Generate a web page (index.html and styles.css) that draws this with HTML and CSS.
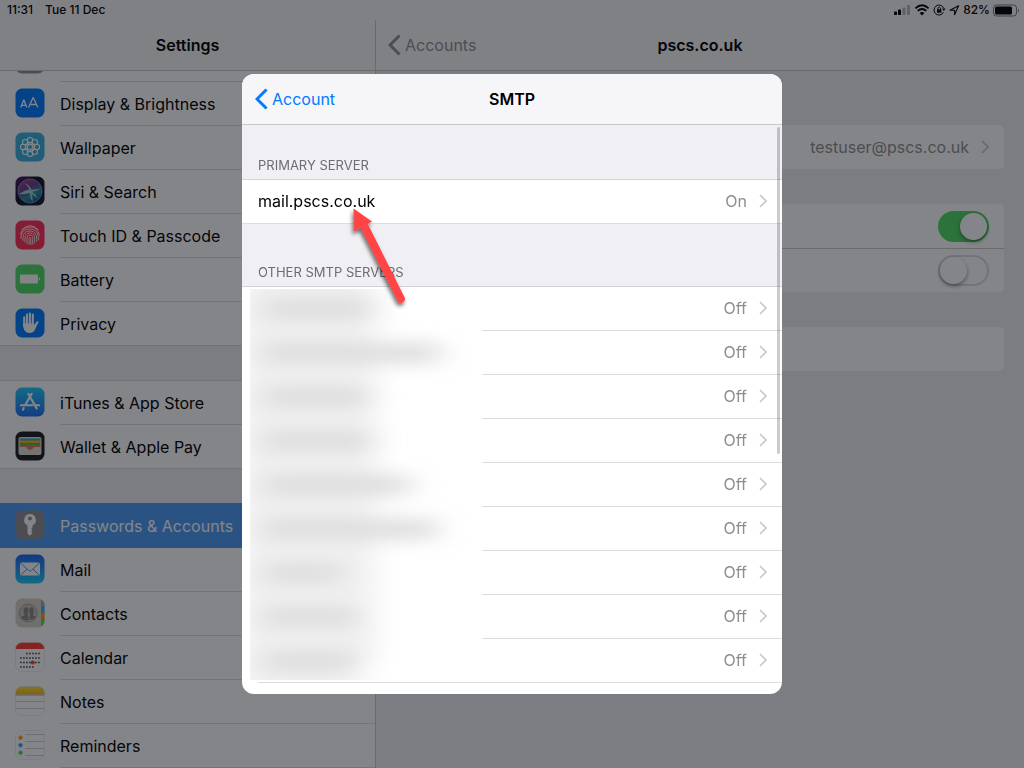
FILE: index.html
```
<!DOCTYPE html>
<html lang="en">
<head>
<meta charset="utf-8">
<title>Settings</title>
<link rel="stylesheet" href="styles.css">
</head>
<body>
<svg class="defs" aria-hidden="true">
  <defs>
    <linearGradient id="store" x1="0" y1="0" x2="0" y2="1"><stop offset="0" stop-color="#1fc8fb"/><stop offset="1" stop-color="#1c6ff2"/></linearGradient>
    <linearGradient id="mail" x1="0" y1="0" x2="0" y2="1"><stop offset="0" stop-color="#1d62f0"/><stop offset="1" stop-color="#19c9fb"/></linearGradient>
    <linearGradient id="notes" x1="0" y1="0" x2="0" y2="1"><stop offset="0" stop-color="#fadb4e"/><stop offset="1" stop-color="#f5c000"/></linearGradient>
    <linearGradient id="siri" x1="0" y1="0" x2="1" y2="1"><stop offset="0" stop-color="#4a1d6e"/><stop offset=".4" stop-color="#141028"/><stop offset="1" stop-color="#101a3c"/></linearGradient>
    <linearGradient id="orb" x1=".2" y1="0" x2=".7" y2="1"><stop offset="0" stop-color="#d8388f"/><stop offset=".4" stop-color="#7b53ae"/><stop offset=".7" stop-color="#2bb1b5"/><stop offset="1" stop-color="#2a55b8"/></linearGradient>
    <clipPath id="tile"><rect x=".5" y=".5" width="29" height="29" rx="6.5"/></clipPath>
    <filter id="soft" x="-30%" y="-30%" width="160%" height="160%"><feGaussianBlur stdDeviation="15 9"/></filter>
    <filter id="drop" x="-30%" y="-30%" width="160%" height="160%"><feDropShadow dx="-1" dy="3" stdDeviation="2" flood-color="#000" flood-opacity=".6"/></filter>
    <symbol id="chevron" viewBox="0 0 8 14"><path d="M1 1l6 6-6 6" fill="none" stroke="currentColor" stroke-width="1.7"/></symbol>
    <symbol id="back" viewBox="0 0 13 22"><path d="M11.500 1.500L2 11l9.500 9.500" fill="none" stroke="currentColor" stroke-width="3"/></symbol>
  </defs>
</svg>

<div class="app">
  <div class="status">
    <div class="status-side"><span>11:31</span><span>Tue 11 Dec</span></div>
    <div class="status-icons">
      <svg width="18" height="12" viewBox="0 0 18 12"><rect x="1" y="7.500" width="3" height="3.500" rx=".7"/><rect x="5" y="5.500" width="3" height="5.500" rx=".7"/><rect x="9.500" y="3.500" width="3" height="7.500" rx=".7" opacity=".25"/><rect x="14" y="1" width="3" height="10" rx=".7" opacity=".25"/></svg>
      <svg class="wifi" width="16" height="12" viewBox="0 0 16 12"><path d="M8 11.500L5.600 8.900Q8 7 10.400 8.900z"/><path d="M1.400 4.400Q8-1.700 14.600 4.400M3.700 6.900Q8 3 12.300 6.900" fill="none" stroke="#000" stroke-width="1.900"/></svg>
      <svg width="13" height="12" viewBox="0 0 13 12"><path d="M10.600 4A5 5 0 1 0 10.500 8.300" fill="none" stroke="#000"/><path d="M9 4.500h3.500L10.800 7z"/><rect x="4" y="5.300" width="4.400" height="3.400"/><path d="M4.900 5.300V4q1.300-2 2.600 0v1.300" fill="none" stroke="#000" stroke-width=".9"/></svg>
      <svg width="11" height="12" viewBox="0 0 11 12"><path d="M1 6.300L9.600 1.700 5.600 10.800V6.300z" fill="none" stroke="#000" stroke-width="1.100" stroke-linejoin="round"/></svg>
      <span>82%</span>
      <svg width="27" height="13" viewBox="0 0 27 13"><rect x=".5" y="1" width="23" height="11" rx="3" fill="none" stroke="#777"/><rect x="2" y="2.500" width="17" height="8" rx="1.500"/><path d="M25 4.500q1.800 2 0 4z" fill="#777"/></svg>
    </div>
  </div>

  <nav class="sidebar">
    <header class="bar"><h1>Settings</h1></header>
    <div class="list">
      <div class="row"><svg class="icon" viewBox="0 0 30 30"><rect x=".5" y=".5" width="29" height="29" rx="6.500" fill="#8e8e93"/></svg><span class="name"></span></div>
      <a class="row" href="#"><svg class="icon" viewBox="0 0 30 30"><rect x=".5" y=".5" width="29" height="29" rx="6.500" fill="#007aff"/><g fill="none" stroke="#fff"><path d="M5.800 19.500l2.800-7.300h.4l2.800 7.300M7 17.300h4" stroke-width="1.300"/><path d="M13.600 19.500l4.400-9.700h.4l4.400 9.700M15.200 16.500h6.200" stroke-width="1.300"/></g></svg><span class="name">Display &amp; Brightness</span></a>
      <a class="row" href="#"><svg class="icon" viewBox="0 0 30 30"><rect x=".5" y=".5" width="29" height="29" rx="6.500" fill="#37aedb"/><g fill="none" stroke="#fff" stroke-width="1.100"><circle cx="15" cy="15" r="2.600"/><circle cx="15" cy="8.200" r="2.700"/><circle cx="19.800" cy="10.200" r="2.700"/><circle cx="21.800" cy="15" r="2.700"/><circle cx="19.800" cy="19.800" r="2.700"/><circle cx="15" cy="21.800" r="2.700"/><circle cx="10.200" cy="19.800" r="2.700"/><circle cx="8.200" cy="15" r="2.700"/><circle cx="10.200" cy="10.200" r="2.700"/><circle cx="15" cy="15" r="4.600"/></g></svg><span class="name">Wallpaper</span></a>
      <a class="row" href="#"><svg class="icon" viewBox="0 0 30 30"><rect x=".5" y=".5" width="29" height="29" rx="6.500" fill="url(#siri)"/><circle cx="15" cy="15" r="12" fill="url(#orb)" opacity=".75"/><circle cx="15" cy="15" r="12" fill="none" stroke="#8fa3c8" stroke-width=".7"/><path d="M4 18q6-4 10.500-4.500Q13 10 9.500 7q5 2 6.800 6.500Q21 14 26 12.500q-5 3-8.700 3.300Q21 19 23 22.500q-4-2.500-6.500-5Q18 22 17.500 26q-2.500-4-2.800-9Q10 18.500 4 18z" fill="#b4ecf0" opacity=".8"/></svg><span class="name">Siri &amp; Search</span></a>
      <a class="row" href="#"><svg class="icon" viewBox="0 0 30 30"><rect x=".5" y=".5" width="29" height="29" rx="6.500" fill="#ff2d55"/><g fill="none" stroke="#fff" stroke-width=".9" stroke-linecap="round" opacity=".9"><path d="M7 9.500Q15 1.500 23 9.500M5.600 14Q7 7 15 7t9.400 8M6 18.500V17q0-8 9-8t8.700 11"/><path d="M8 20.500v-3q0-6.500 7-6.500t6.700 8.500l-.4 2M10 22v-4q0-5 5-5t4.700 7l-.7 3.500M12 23.500V18q0-3 3-3t2.700 4.500l-.7 5M14 24.500V18q1-1.500 1.800 0l-.4 6"/></g></svg><span class="name">Touch ID &amp; Passcode</span></a>
      <a class="row" href="#"><svg class="icon" viewBox="0 0 30 30"><rect x=".5" y=".5" width="29" height="29" rx="6.500" fill="#4cd964"/><rect x="5" y="10.500" width="18" height="9" rx="1.200" fill="#fff"/><path d="M24 13.300q2.400 1.700 0 3.400z" fill="#fff"/></svg><span class="name">Battery</span></a>
      <a class="row" href="#"><svg class="icon" viewBox="0 0 30 30"><rect x=".5" y=".5" width="29" height="29" rx="6.500" fill="#007aff"/><g stroke="#fff" stroke-width="2.100" stroke-linecap="round" fill="none"><path d="M9.200 9.300v9M12 6.600V17M14.900 5.500V17M17.800 6.600V17"/></g><path d="M8.150 15.500h10.700v1.800l3-3.700q1.300-.8 1.900.2-1.500 2.900-3.300 6.900-1.700 4.300-5.600 4.300-5.300 0-6.300-5z" fill="#fff"/></svg><span class="name">Privacy</span></a>
      <div class="gap"></div>
      <a class="row" href="#"><svg class="icon" viewBox="0 0 30 30"><rect x=".5" y=".5" width="29" height="29" rx="6.500" fill="url(#store)"/><g stroke="#fff" stroke-width="2.100" stroke-linecap="round" fill="none"><path d="M13.300 6.800L21.700 21.500M16.700 6.800L10.200 18M8.700 21l-.8 1.700M5.800 18.300h11.600M20.600 18.300h3.600"/></g></svg><span class="name">iTunes &amp; App Store</span></a>
      <a class="row last" href="#"><svg class="icon" viewBox="0 0 30 30"><rect x=".5" y=".5" width="29" height="29" rx="6.500" fill="#1c1c20"/><rect x="3.500" y="6" width="23" height="18" rx="2" fill="#dedcd2"/><path d="M4.700 7.500h20.600v3H4.700z" fill="#3c9fd5"/><path d="M4.700 9.500h20.600v3H4.700z" fill="#ffb700"/><path d="M4.700 11.800h20.600v3H4.700z" fill="#46bb4c"/><path d="M4.700 14h20.600v2H19q-1.400 3-4 3t-4-3H4.700z" fill="#f36d62"/></svg><span class="name">Wallet &amp; Apple Pay</span></a>
      <div class="gap"></div>
      <a class="row selected" href="#" aria-current="page"><svg class="icon" viewBox="0 0 30 30"><rect x=".5" y=".5" width="29" height="29" rx="6.500" fill="#8e8e93"/><path fill-rule="evenodd" d="M15 4a6 6 0 0 0-2.500 11.400v8l2.300 2.300 2.700-2.500-1.400-1.300 1.500-1.500-1.500-1.500 1.400-1.300v-2.200A6 6 0 0 0 15 4zm0 2.600a1.900 1.900 0 1 1 0 3.800 1.900 1.900 0 0 1 0-3.800z" fill="#fff"/></svg><span class="name">Passwords &amp; Accounts</span></a>
      <a class="row" href="#"><svg class="icon" viewBox="0 0 30 30"><rect x=".5" y=".5" width="29" height="29" rx="6.500" fill="url(#mail)"/><rect x="5" y="8.500" width="20" height="13" rx="1.500" fill="#fff"/><path d="M5.500 9l8.300 7.600q1.200 1 2.400 0L24.500 9M5.500 21.200l6.500-6M24.500 21.200l-6.500-6" fill="none" stroke="#2b93f5" stroke-width=".9"/></svg><span class="name">Mail</span></a>
      <a class="row" href="#"><svg class="icon" viewBox="0 0 30 30"><g clip-path="url(#tile)"><path d="M0 0h30v30H0z" fill="#d6d3cb"/><path d="M26 0h4v8h-4z" fill="#a9a9a9"/><path d="M26 8h4v7h-4z" fill="#39b3f0"/><path d="M26 15h4v7h-4z" fill="#ff9500"/><path d="M26 22h4v8h-4z" fill="#4cd964"/></g><circle cx="13.200" cy="15" r="9" fill="#c4c1ba" stroke="#9a9892" stroke-width=".8"/><g fill="#8a8882"><path d="M5.700 20q.4-1.700 3.500-2.500.9-.7-.3-3-1-5.200 2.200-5.200 3 0 2.200 5-1.200 2.400-.3 3.200l1 4.500q-4 1.500-8.300-2z"/><path d="M14.800 22l-.3-4.200q1-.8-.2-3.300-.8-5.200 2.200-5.200t2 5.200q-1.100 2.300-.3 3 2 .6 2.800 1.600-1.700 2.500-6.200 2.900z"/></g></svg><span class="name">Contacts</span></a>
      <a class="row" href="#"><svg class="icon" viewBox="0 0 30 30"><g clip-path="url(#tile)"><path d="M0 0h30v30H0z" fill="#fff"/><path d="M0 0h30v7H0z" fill="#ff3b30"/></g><rect x=".5" y=".5" width="29" height="29" rx="6.500" fill="none" stroke="#ddd" stroke-width=".5"/><path d="M11 11.500h14M5 16h20M5 20.500h20M5 25h14" stroke="#555" stroke-width="1.400" stroke-dasharray="1.800 1.200"/><circle cx="17.700" cy="20.500" r="2" fill="#ff3b30"/></svg><span class="name">Calendar</span></a>
      <a class="row" href="#"><svg class="icon" viewBox="0 0 30 30"><g clip-path="url(#tile)"><path d="M0 0h30v30H0z" fill="#fff"/><path d="M0 0h30v8.500H0z" fill="url(#notes)"/><path d="M0 15.500h30M0 22.500h30" stroke="#d0d0d0"/><path d="M0 9h30" stroke="#aaa"/></g><rect x=".5" y=".5" width="29" height="29" rx="6.500" fill="none" stroke="#ddd" stroke-width=".5"/></svg><span class="name">Notes</span></a>
      <a class="row" href="#"><svg class="icon" viewBox="0 0 30 30"><rect x=".5" y=".5" width="29" height="29" rx="6.500" fill="#fff" stroke="#e2e2e2" stroke-width=".6"/><path d="M10.500 4.500h19M10.500 11.500h19M10.500 18.500h19M10.500 25.500h19" stroke="#d0d0d0"/><circle cx="5.500" cy="7.700" r="2" fill="#ff9500" stroke="#ffc98a"/><circle cx="5.500" cy="15.200" r="2" fill="#1b9cf7" stroke="#94cdf7"/><circle cx="5.500" cy="22.700" r="2" fill="#55d048" stroke="#a9e3a2"/></svg><span class="name">Reminders</span></a>
    </div>
  </nav>

  <main class="detail">
    <header class="bar">
      <button class="back dim"><svg width="13" height="22"><use href="#back"/></svg>Accounts</button>
      <h2>pscs.co.uk</h2>
    </header>
    <div class="cards">
      <a class="card line" href="#"><span>testuser@pscs.co.uk</span><svg class="chev" width="8" height="14"><use href="#chevron"/></svg></a>
      <div class="card">
        <div class="line"><input class="switch" type="checkbox" checked aria-label="Mail"></div>
        <div class="line"><input class="switch" type="checkbox" aria-label="Notes"></div>
      </div>
      <div class="card line"></div>
    </div>
  </main>
</div>

<div class="scrim">
  <section class="sheet" role="dialog" aria-labelledby="sheet-title">
    <header class="sheet-bar">
      <button class="back"><svg width="13" height="22"><use href="#back"/></svg>Account</button>
      <h2 id="sheet-title">SMTP</h2>
    </header>
    <div class="sheet-body">
      <h3>PRIMARY SERVER</h3>
      <a class="server primary" href="#"><span class="host">mail.pscs.co.uk</span><span>On</span><svg class="chev" width="8" height="14"><use href="#chevron"/></svg></a>
      <h3 class="tall">OTHER SMTP SERVERS</h3>
      <div class="servers">
        <a class="server" href="#"><span>Off</span><svg class="chev" width="8" height="14"><use href="#chevron"/></svg></a>
        <a class="server" href="#"><span>Off</span><svg class="chev" width="8" height="14"><use href="#chevron"/></svg></a>
        <a class="server" href="#"><span>Off</span><svg class="chev" width="8" height="14"><use href="#chevron"/></svg></a>
        <a class="server" href="#"><span>Off</span><svg class="chev" width="8" height="14"><use href="#chevron"/></svg></a>
        <a class="server" href="#"><span>Off</span><svg class="chev" width="8" height="14"><use href="#chevron"/></svg></a>
        <a class="server" href="#"><span>Off</span><svg class="chev" width="8" height="14"><use href="#chevron"/></svg></a>
        <a class="server" href="#"><span>Off</span><svg class="chev" width="8" height="14"><use href="#chevron"/></svg></a>
        <a class="server" href="#"><span>Off</span><svg class="chev" width="8" height="14"><use href="#chevron"/></svg></a>
        <a class="server" href="#"><span>Off</span><svg class="chev" width="8" height="14"><use href="#chevron"/></svg></a>
        <svg class="masked" viewBox="0 0 232 391" preserveAspectRatio="none" aria-hidden="true">
          <rect width="232" height="391" fill="#fff"/>
          <g filter="url(#soft)">
            <path d="M-10-30h135v400h-15v60H-10z" fill="#f0f0f0"/>
            <path d="M12 10h113v20H12zM12 54h178v20H12zM12 98h108v20H12zM12 142h112v20H12zM12 186h148v20H12zM12 230h175v20H12zM12 274h80v20H12zM12 318h96v20H12zM12 362h96v20H12z" fill="#dcdcdc"/>
          </g>
        </svg>
      </div>
      <div class="thumb"></div>
    </div>
    <svg class="pointer" width="70" height="110" viewBox="0 0 70 110" aria-hidden="true"><path filter="url(#drop)" d="M10.500 4.500l18.500 13-4.200 2.400 36.600 73.100a3.900 3.900 0 0 1-7 3.700L17.500 23.800 10.800 27.500z" fill="#ff4444"/></svg>
  </section>
</div>
</body>
</html>
```

FILE: styles.css
```
* { box-sizing: border-box; }
body {
  margin: 0;
  height: 100vh;
  overflow: hidden;
  font: 16px/22px Inter, "Liberation Sans", sans-serif;
  color: #000;
  background: #efeff4;
}
h1, h2, h3 { margin: 0; font-size: 16px; font-weight: 600; }
a { color: inherit; text-decoration: none; }
button { border: 0; background: none; padding: 0; font: inherit; cursor: pointer; }
.defs { position: absolute; width: 0; height: 0; }

.app { height: 100vh; display: grid; grid-template-columns: 376px 1fr; grid-template-rows: 20px 1fr; }
.status {
  grid-column: 1 / -1;
  display: flex;
  align-items: center;
  justify-content: space-between;
  padding: 0 4px 0 7px;
  background: #f7f7f7;
  font-size: 12px;
  font-weight: 500;
}
.status-side { display: flex; gap: 12px; }
.status-icons { display: flex; align-items: center; gap: 3px; }

.sidebar, .detail { display: flex; flex-direction: column; min-height: 0; min-width: 0; overflow: hidden; }
.sidebar { border-right: 1px solid #c8c8cc; background: #fff; }
.bar {
  position: relative;
  z-index: 1;
  flex: none;
  height: 51px;
  display: grid;
  place-items: center;
  background: #f7f7f7;
  border-bottom: 1px solid #c8c8cc;
}
.back { display: flex; align-items: center; gap: 4px; color: #007aff; }
.bar .back { position: absolute; left: 12px; }
.dim { color: #8e8e93; }

.list { margin-top: -33px; }
.row { display: flex; align-items: center; height: 44px; padding-left: 15px; }
.icon { flex: none; width: 30px; height: 30px; margin: 0 15px 2px 0; }
.name { flex: 1; height: 44px; line-height: 44px; border-bottom: 1px solid #dcdce0; }
.gap {
  position: relative;
  height: 36px;
  margin-top: -1px;
  background: #efeff4;
  border-top: 1px solid #d8d8dc;
  border-bottom: 1px solid #d8d8dc;
}
.last .name { border-bottom: 0; }
.selected { position: relative; background: #4a9bf5; color: #fff; box-shadow: 0 -1px #4a9bf5; }
.selected .name { border-bottom-color: #4a9bf5; }

.cards { display: flex; flex-direction: column; gap: 35px; padding: 54px 20px 0; }
.card { background: #fff; border-radius: 5px; color: #8e8e93; }
.line { display: flex; align-items: center; justify-content: flex-end; gap: 12px; height: 44px; padding-right: 15px; }
.line + .line { border-top: 1px solid #c8c7cc; }
.chev { color: #c7c7cc; }
.switch {
  appearance: none;
  margin: 0;
  width: 51px;
  height: 31px;
  border-radius: 16px;
  border: 2px solid #dcdce0;
  display: flex;
}
.switch::before {
  content: "";
  width: 27px;
  height: 27px;
  border-radius: 50%;
  background: #fff;
  box-shadow: 0 2px 4px rgba(0, 0, 0, .4);
}
.switch:checked { background: #4cd964; border-color: #4cd964; justify-content: flex-end; }

.scrim {
  position: fixed;
  z-index: 2;
  inset: 0;
  display: grid;
  place-items: center;
  background: rgba(10, 12, 18, .5);
}
.sheet {
  position: relative;
  display: flex;
  flex-direction: column;
  width: min(540px, 100vw);
  height: min(620px, 100vh);
  border-radius: 12px;
  overflow: hidden;
  background: #fff;
}
.sheet-bar {
  position: relative;
  flex: none;
  height: 51px;
  display: grid;
  place-items: center;
  background: #f6f6f8;
  border-bottom: 1px solid #c8c8cc;
}
.sheet-bar .back { position: absolute; left: 13px; }
.sheet-body { position: relative; flex: 1; min-height: 0; overflow: hidden; }
h3 {
  height: 55px;
  padding: 30px 16px 0;
  font-size: 13px;
  font-weight: 400;
  line-height: 20px;
  color: #6d6d72;
  background: #efeff4;
  border-bottom: 1px solid #d4d4d8;
}
.tall { height: 63px; padding-top: 38px; }
.server {
  display: flex;
  align-items: center;
  gap: 12px;
  height: 44px;
  margin-left: 16px;
  padding: 0 15px 1px 0;
  border-bottom: 1px solid #dcdcde;
  color: #8e8e93;
}
.server.primary { margin-left: 0; padding-left: 16px; }
.server span:first-child { margin-left: auto; }
.server .host { flex: 1; color: #000; }
.servers { position: relative; }
.masked { position: absolute; left: 8px; top: 2px; width: 232px; height: 391px; }
.thumb { position: absolute; right: 2px; top: 2px; width: 3px; height: 327px; border-radius: 2px; background: rgba(0, 0, 0, .2); }
.pointer { position: absolute; left: 101px; top: 130px; }
```
